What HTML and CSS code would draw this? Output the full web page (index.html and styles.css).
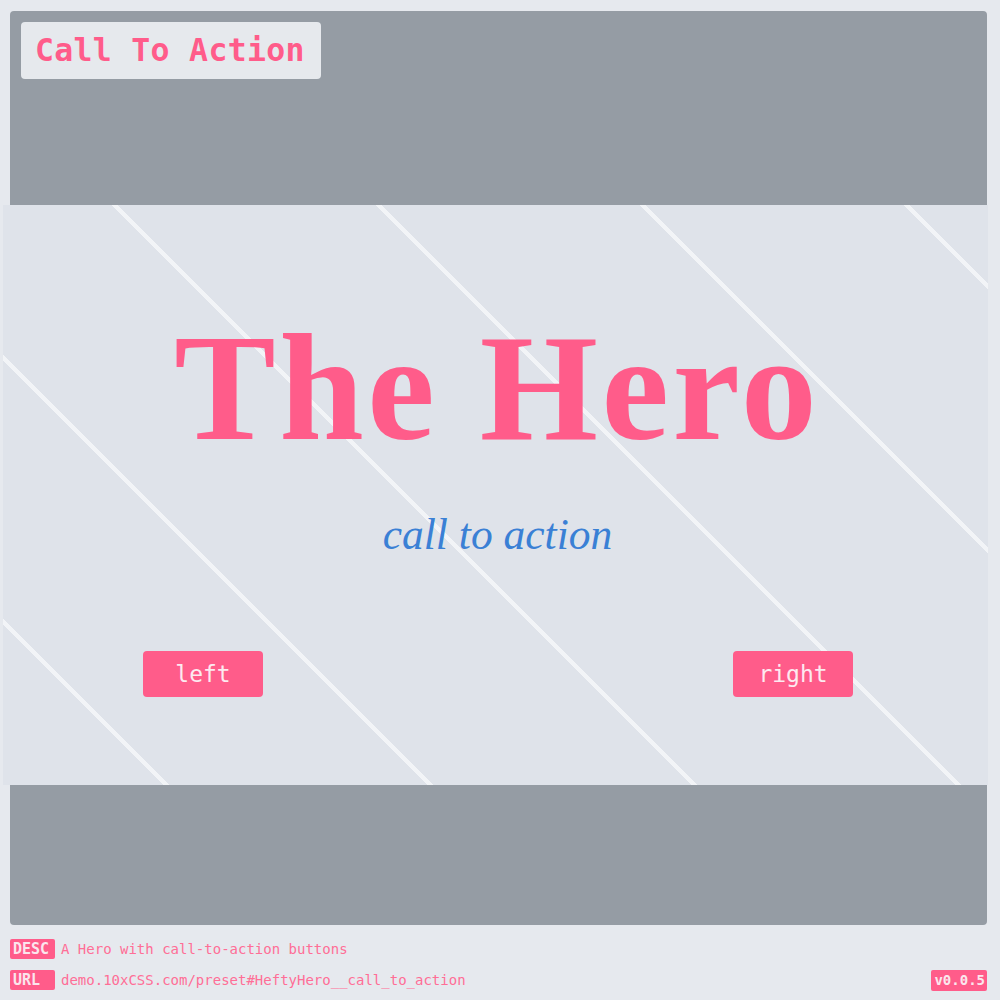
FILE: index.html
```html
<!DOCTYPE html>
<html>
<head>
<meta charset="utf-8">
<link rel="stylesheet" href="styles.css">
</head>
<body>
<div class="frame">
  <div class="frame-top">
    <div class="badge-title">Call To Action</div>
  </div>
  <section class="hero">
    <h1 class="hero-title">The Hero</h1>
    <p class="hero-sub">call to action</p>
    <div class="hero-actions">
      <button class="btn">left</button>
      <button class="btn">right</button>
    </div>
  </section>
  <div class="frame-bottom"></div>
</div>
<footer class="meta">
  <div class="meta-row">
    <span class="tag">DESC</span>
    <span class="meta-text">A Hero with call-to-action buttons</span>
  </div>
  <div class="meta-row">
    <span class="tag">URL</span>
    <span class="meta-text">demo.10xCSS.com/preset#HeftyHero__call_to_action</span>
    <span class="version">v0.0.5</span>
  </div>
</footer>
</body>
</html>
```

FILE: styles.css
```css
html, body {
  margin: 0;
  padding: 0;
}
body {
  background: #e6e9ee;
  width: 1000px;
  height: 1000px;
  overflow: hidden;
  font-family: "DejaVu Sans Mono", "Liberation Mono", monospace;
}
.frame {
  margin: 11px 13px 0 10px;
  height: 914px;
  background: #959ca4;
  border-radius: 4px;
  display: flex;
  flex-direction: column;
}
.frame-top {
  height: 194px;
  padding: 11px;
  box-sizing: border-box;
  display: flex;
  align-items: flex-start;
}
.badge-title {
  background: #e6e9ed;
  border-radius: 4px;
  height: 57px;
  line-height: 57px;
  padding: 0 16px 0 14px;
  color: #ff5c8a;
  font-weight: bold;
  font-size: 31.5px;
  letter-spacing: 0.3px;
}
.hero {
  margin: 0 -1px 0 -7px;
  height: 580px;
  box-sizing: border-box;
  padding-top: 107px;
  background-color: #dfe3ea;
  background-image: repeating-linear-gradient(45deg,
    transparent 0 113.4px,
    #f2f4f7 113.4px 117.9px,
    transparent 117.9px 186.68px);
  display: flex;
  flex-direction: column;
  align-items: center;
}
.hero-title {
  margin: 0;
  font-family: "Liberation Serif", "Times New Roman", serif;
  font-weight: bold;
  font-size: 152px;
  line-height: 152px;
  height: 152px;
  color: #ff5c8a;
  letter-spacing: 3.5px;
  padding-left: 3.5px;
}
.hero-sub {
  margin: 49px 0 0;
  padding-left: 4px;
  font-family: "Liberation Serif", "Times New Roman", serif;
  font-style: italic;
  font-size: 43.5px;
  line-height: 43px;
  color: #3a80d5;
}
.hero-actions {
  margin-top: 95px;
  align-self: stretch;
  display: flex;
  justify-content: space-between;
  padding: 0 135px 0 140px;
}
.btn {
  width: 120px;
  height: 46px;
  border: 0;
  border-radius: 4px;
  background: #ff5c8a;
  color: #fdeaf0;
  font-family: "DejaVu Sans Mono", monospace;
  font-size: 23px;
  padding: 0;
}
.frame-bottom {
  flex: 1;
}
.meta {
  padding: 14px 13px 0 10px;
  display: flex;
  flex-direction: column;
  gap: 11px;
}
.meta-row {
  display: flex;
  align-items: center;
  height: 20px;
}
.tag {
  width: 45px;
  height: 20px;
  box-sizing: border-box;
  padding-left: 3px;
  background: #ff5c8a;
  color: #fbe6ed;
  border-radius: 2px;
  font-weight: bold;
  font-size: 15px;
  line-height: 20px;
}
.meta-text {
  margin-left: 6px;
  color: #ff6e96;
  font-size: 14px;
  flex: 1;
}
.version {
  background: #ff5c8a;
  color: #fbe6ed;
  border-radius: 2px;
  font-weight: bold;
  font-size: 14px;
  line-height: 21px;
  height: 21px;
  padding: 0 2px 0 3px;
}
```
